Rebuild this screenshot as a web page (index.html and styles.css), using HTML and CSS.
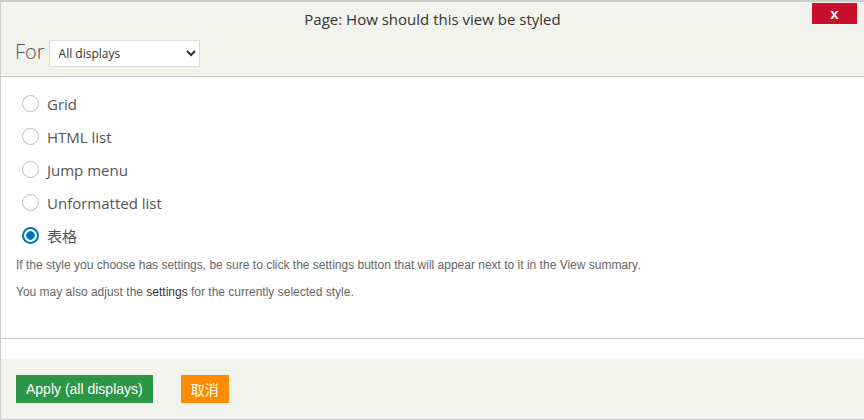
FILE: index.html
```html
<!DOCTYPE html>
<html lang="en">
<head>
    <meta charset="UTF-8">
    <title>Page: How should this view be styled</title>
    <link rel="stylesheet" href="styles.css">
</head>
<body>
    <div class="dialog">
        <div class="dialog-header">
            <h1 class="dialog-title">Page: How should this view be styled</h1>
            <button class="btn-close" type="button">x</button>
            <div class="for-row">
                <label for="display" class="for-label">For</label>
                <select id="display" class="for-select">
                    <option>All displays</option>
                    <option>This page (override)</option>
                </select>
            </div>
        </div>
        <form class="dialog-body">
            <div class="options">
                <label class="option"><input type="radio" name="style"><span>Grid</span></label>
                <label class="option"><input type="radio" name="style"><span>HTML list</span></label>
                <label class="option"><input type="radio" name="style"><span>Jump menu</span></label>
                <label class="option"><input type="radio" name="style"><span>Unformatted list</span></label>
                <label class="option"><input type="radio" name="style" checked><span>表格</span></label>
            </div>
            <p class="help">If the style you choose has settings, be sure to click the settings button that will appear next to it in the View summary.</p>
            <p class="help">You may also adjust the <a href="#">settings</a> for the currently selected style.</p>
        </form>
        <div class="dialog-footer">
            <button class="btn btn-apply" type="button">Apply (all displays)</button>
            <button class="btn btn-cancel" type="button">取消</button>
        </div>
    </div>
</body>
</html>
```

FILE: styles.css
```css
* {
    box-sizing: border-box;
}
body {
    margin: 0;
    font-family: "Open Sans", "Noto Sans CJK SC", sans-serif;
    color: #333;
    background: #fff;
}
.dialog {
    width: 864px;
    height: 420px;
    border-top: 2px solid #ccc;
    border-left: 1px solid #ccc;
    border-bottom: 1px solid #ccc;
    display: flex;
    flex-direction: column;
}
.dialog-header {
    position: relative;
    background-color: #f3f3ee;
    height: 75px;
    border-bottom: 1px solid #ccc;
    padding-top: 7px;
}
.dialog-title {
    margin: 0;
    text-align: center;
    font-size: 15px;
    font-weight: normal;
    line-height: 20px;
    color: #333;
}
.btn-close {
    position: absolute;
    top: 1px;
    right: 7px;
    width: 45px;
    height: 21px;
    border: none;
    background-color: #c8102e;
    color: #fff;
    font-family: "Liberation Sans", sans-serif;
    font-size: 15px;
    font-weight: bold;
    line-height: 19px;
    padding: 0;
}
.for-row {
    display: flex;
    align-items: center;
    gap: 4px;
    margin-top: 11px;
    padding-left: 14px;
}
.for-label {
    font-size: 20px;
    font-weight: 300;
    color: #555;
    line-height: 24px;
    margin-top: -4px;
}
.for-select {
    width: 151px;
    height: 27px;
    border: 1px solid #ddd;
    background: #fff;
    font-family: "Open Sans", sans-serif;
    font-size: 12px;
    color: #333;
    padding: 0 5px;
}
.dialog-body {
    background: #fff;
    height: 262px;
    border-bottom: 1px solid #ccc;
    padding: 10px 15px 0;
    margin: 0;
}
.options {
    display: flex;
    flex-direction: column;
}
.option {
    display: flex;
    align-items: center;
    height: 33px;
    font-size: 15px;
    color: #555;
}
.option input {
    appearance: none;
    width: 17px;
    height: 17px;
    margin: 0 8px 0 6px;
    border: 1px solid #bbb;
    border-radius: 50%;
    background: #fff;
}
.option input:checked {
    border: 2px solid #0074bd;
    background: radial-gradient(circle, #0074bd 0 4px, #fff 4.5px);
}
.help {
    font-family: "Liberation Sans", sans-serif;
    font-size: 12px;
    color: #666;
    margin: 6px 0 12px;
    line-height: 15px;
}
.help a {
    color: #333;
    text-decoration: none;
}
.dialog-footer {
    margin-top: 20px;
    flex: 1;
    background-color: #f3f3ee;
    padding: 16px 15px 0;
    display: flex;
    align-items: flex-start;
    gap: 28px;
}
.btn {
    border: none;
    height: 28px;
    color: #fff;
    font-family: "Liberation Sans", "Noto Sans CJK SC", sans-serif;
    font-size: 14px;
    padding: 0 10px;
}
.btn-apply {
    background-color: #2d9646;
}
.btn-cancel {
    background-color: #ff8c00;
}
```
